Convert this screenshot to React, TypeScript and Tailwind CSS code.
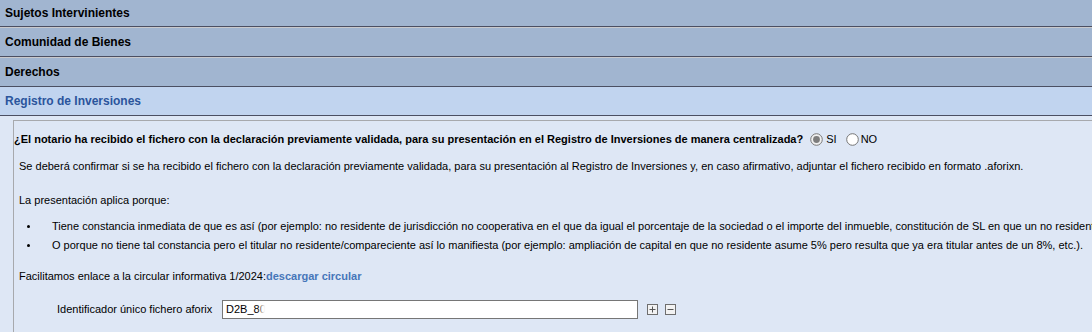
import React from 'react';

const sections = ['Sujetos Intervinientes', 'Comunidad de Bienes', 'Derechos'];

function Radio({ checked }: { checked?: boolean }) {
  return (
    <svg width="13" height="13" viewBox="0 0 13 13" className="shrink-0">
      <circle cx="6.5" cy="6.5" r="5.8" fill={checked ? '#f0f0f0' : '#ffffff'} stroke={checked ? '#7a7a7a' : '#767676'} strokeWidth="1" />
      {checked && <circle cx="6.5" cy="6.5" r="3.4" fill="#7d7d7d" />}
    </svg>
  );
}

function BoxButton({ minus }: { minus?: boolean }) {
  return (
    <svg width="11" height="11" viewBox="0 0 11 11" className="shrink-0">
      <rect x="0.5" y="0.5" width="10" height="10" fill="#f2f2f2" stroke="#6e6e6e" />
      <line x1="2.5" y1="5.5" x2="8.5" y2="5.5" stroke="#555" strokeWidth="1" />
      {!minus && <line x1="5.5" y1="2.5" x2="5.5" y2="8.5" stroke="#555" strokeWidth="1" />}
    </svg>
  );
}

export default function App() {
  return (
    <div className="w-[1092px] h-[332px] overflow-hidden bg-[#dee7f5] text-black" style={{ fontFamily: '"Liberation Sans", Arial, sans-serif' }}>
      <div className="h-[27px] flex items-center px-[5px] bg-[#a1b5d0] border-b border-[#4b4f62] text-[12px] font-bold">{sections[0]}</div>
      <div className="h-[30px] flex items-center px-[5px] bg-[#a1b5d0] border-t border-t-[#c9c9cc] border-b border-[#4b4f62] text-[12px] font-bold">{sections[1]}</div>
      <div className="h-[30px] flex items-center px-[5px] bg-[#a1b5d0] border-t border-t-[#c9c9cc] border-b border-[#4b4f62] text-[12px] font-bold">{sections[2]}</div>
      <div className="h-[29px] flex items-center px-[5px] bg-[#c1d4ef] border-b border-[#4b4f62] text-[12px] font-bold text-[#2b549c]">Registro de Inversiones</div>

      <div className="pl-[13px] pt-[4px]">
        <div className="border-l border-t border-[#a7a9ad] h-[220px] text-[11px] whitespace-nowrap overflow-hidden">
          <div className="mt-[11px] leading-[15px] flex items-center">
            <span className="font-bold">¿El notario ha recibido el fichero con la declaración previamente validada, para su presentación en el Registro de Inversiones de manera centralizada?</span>
            <span className="ml-[7px]"><Radio checked /></span>
            <span className="ml-[3px]">SI</span>
            <span className="ml-[9px]"><Radio /></span>
            <span className="ml-[2px]">NO</span>
          </div>
          <p className="mt-[12px] leading-[15px] pl-[5px]">
            Se deberá confirmar si se ha recibido el fichero con la declaración previamente validada, para su presentación al Registro de Inversiones y, en caso afirmativo, adjuntar el fichero recibido en formato .aforixn.
          </p>
          <p className="mt-[19px] leading-[15px] pl-[5px]">La presentación aplica porque:</p>
          <ul className="mt-[9px] pl-[13px]">
            <li className="h-[19px] flex items-center">
              <span className="w-[3px] h-[3px] rounded-full bg-black shrink-0" />
              <span className="ml-[22px]">Tiene constancia inmediata de que es así (por ejemplo: no residente de jurisdicción no cooperativa en el que da igual el porcentaje de la sociedad o el importe del inmueble, constitución de SL en que un no residente asume más del 10%, etc.).</span>
            </li>
            <li className="h-[19px] flex items-center">
              <span className="w-[3px] h-[3px] rounded-full bg-black shrink-0" />
              <span className="ml-[22px]">O porque no tiene tal constancia pero el titular no residente/compareciente así lo manifiesta (por ejemplo: ampliación de capital en que no residente asume 5% pero resulta que ya era titular antes de un 8%, etc.).</span>
            </li>
          </ul>
          <p className="mt-[14px] leading-[15px] pl-[5px]">
            Facilitamos enlace a la circular informativa 1/2024:<a className="font-bold text-[#4676b9] cursor-pointer">descargar circular</a>
          </p>
          <div className="mt-[16px] flex items-center">
            <label className="w-[208px] pl-[43px]">Identificador único fichero aforix</label>
            <div className="w-[416px] h-[19px] border border-[#767676] bg-white flex items-center pl-[3px] overflow-hidden">
              <span>D2B_80</span>
              <span className="w-[70px] h-[16px] bg-white blur-[2px] -ml-[5px]" />
            </div>
            <span className="ml-[9px]"><BoxButton /></span>
            <span className="ml-[7px]"><BoxButton minus /></span>
          </div>
        </div>
      </div>
    </div>
  );
}
